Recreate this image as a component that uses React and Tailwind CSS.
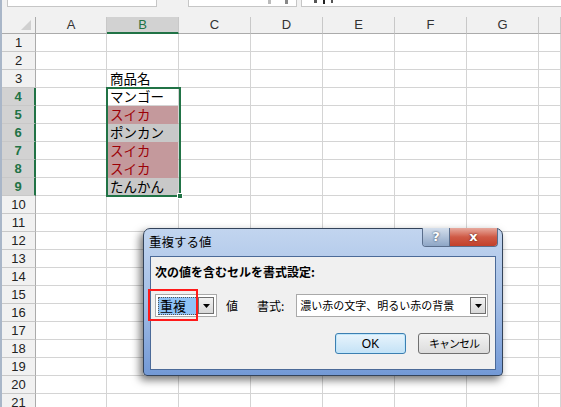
import { Fragment } from 'react';

const cols = ['A', 'B', 'C', 'D', 'E', 'F', 'G', ''];
const rows = Array.from({ length: 21 }, (_, i) => i + 1);

// B column content
const cells = {
  3: { text: '商品名', bg: 'bg-white border-b-[#d4d4d4]', color: 'text-black' },
  4: { text: 'マンゴー', bg: 'bg-white border-b-[#d4d4d4]', color: 'text-black' },
  5: { text: 'スイカ', bg: 'bg-[#c4999c] border-b-[#c4999c]', color: 'text-[#9c0006]' },
  6: { text: 'ポンカン', bg: 'bg-[#c8c8c8] border-b-[#c8c8c8]', color: 'text-black' },
  7: { text: 'スイカ', bg: 'bg-[#c4999c] border-b-[#c4999c]', color: 'text-[#9c0006]' },
  8: { text: 'スイカ', bg: 'bg-[#c4999c] border-b-[#c4999c]', color: 'text-[#9c0006]' },
  9: { text: 'たんかん', bg: 'bg-[#c8c8c8] border-b-[#c8c8c8]', color: 'text-black' },
};

const jp = "font-['Noto_Sans_CJK_JP',sans-serif]";

function DropArrow() {
  return (
    <div className="flex h-[17px] w-[16px] items-center justify-center border border-[#707070] bg-linear-to-b from-[#f2f2f2] to-[#d8d8d8]">
      <svg width="7" height="4" viewBox="0 0 7 4">
        <path d="M0 0h7L3.5 4z" fill="#000" />
      </svg>
    </div>
  );
}

function Dialog() {
  return (
    <div className="absolute left-[141px] top-[228px] h-[148px] w-[360px] rounded-t-[7px] rounded-b-[4px] border border-[#33435a] bg-linear-to-b from-[#c2d5ef] via-[#a3bee6] to-[#7399d6] shadow-[-3px_4px_9px_rgba(0,0,0,0.55)]">
      <div className={`flex h-[27px] items-center pl-[5px] text-[12.5px] text-black ${jp}`}>重複する値</div>

      <div className="absolute right-[4px] top-[-1px] flex h-[19px] overflow-hidden rounded-b-[4px] border border-t-0 border-[#5a6e8c]">
        <div className="flex w-[27px] items-center justify-center border-r border-[#5a6e8c] bg-linear-to-b from-[#d3deec] to-[#8ea6c6] font-['DejaVu_Sans',sans-serif] text-[13px] font-bold text-white [text-shadow:0_0_2px_#1d2b3f]">?</div>
        <div className="flex w-[47px] items-center justify-center bg-linear-to-b from-[#e6a99e] via-[#cf5a46] to-[#c2402a] font-['DejaVu_Sans',sans-serif] text-[13px] font-bold text-white [text-shadow:0_0_2px_#3b0d06]">x</div>
      </div>

      <div className={`mx-[6px] h-[114px] border border-[#4b6a98] bg-[#f0f0f0] pl-[4px] pt-[7px] ${jp}`}>
        <div className="text-[12px] font-bold leading-[16px] text-black">次の値を含むセルを書式設定:</div>

        <div className="relative mt-[14px] flex h-[23px] items-center text-[12px] text-black">
          <div className="flex h-[23px] w-[62px] items-center justify-between border border-[#a9a9a9] bg-white px-[2px]">
            <div className="flex h-[18px] w-[40px] items-center border border-dotted border-[#555] bg-[#8fc3f7] pl-[1px] text-[13px]">重複</div>
            <DropArrow />
          </div>
          <div className="absolute left-[-7px] top-[-5px] h-[32px] w-[50px] border-2 border-[#ff1a1a]" />
          <div className="ml-[9px]">値</div>
          <div className="ml-[19px]">書式:</div>
          <div className="ml-[12px] flex h-[23px] w-[192px] items-center justify-between border border-[#a9a9a9] bg-white pl-[3px] pr-[1px]">
            <span className="text-[11px]">濃い赤の文字、明るい赤の背景</span>
            <DropArrow />
          </div>
        </div>

        <div className="mt-[16px] flex justify-end gap-[12px] pr-[5px]">
          <button className="h-[21px] w-[71px] rounded-[3px] border border-[#3c7fb1] bg-linear-to-b from-[#e8f4fc] to-[#c4e2f6] font-['Liberation_Sans',sans-serif] text-[12px] text-black shadow-[inset_0_0_0_1px_#bfe6fb]">OK</button>
          <button className="h-[21px] w-[72px] rounded-[3px] border border-[#707070] bg-linear-to-b from-[#f3f3f3] to-[#dcdcdc] text-[11px] tracking-[-1px] text-black">キャンセル</button>
        </div>
      </div>
    </div>
  );
}

export default function App() {
  return (
    <div className="relative h-[407px] w-[561px] overflow-hidden border-l-2 border-[#a9b6c8] bg-[#f1f1f1]">
      {/* formula bar strip */}
      <div className="flex h-[17px] items-start">
        <div className="ml-[5px] h-[7px] w-[150px] border border-t-0 border-[#c6c6c6] bg-white" />
        <div className="ml-[31px] flex h-[7px] w-[109px] justify-end gap-[14px] border border-t-0 border-[#c6c6c6] bg-white pr-[8px]">
          <div className="h-[4px] w-[3px] bg-[#bbb]" />
          <div className="h-[4px] w-[3px] bg-[#888]" />
        </div>
        <div className="ml-[4px] flex h-[7px] flex-1 gap-[6px] border border-t-0 border-r-0 border-[#c6c6c6] bg-white pl-[12px]">
          <div className="h-[3px] w-[3px] bg-[#555]" />
          <div className="h-[4px] w-[2px] bg-[#222]" />
          <div className="h-[3px] w-[2px] bg-[#555]" />
        </div>
      </div>

      {/* sheet */}
      <div className="grid grid-cols-[34px_71px_72px_72px_72px_72px_72px_72px_1fr] font-['Liberation_Sans',sans-serif]">
        <div className="relative h-[17px] border-r border-b border-[#ababab] bg-[#f1f1f1]">
          <svg className="absolute bottom-[3px] right-[4px]" width="10" height="10" viewBox="0 0 10 10">
            <path d="M10 0V10H0z" fill="#d0d0d0" />
          </svg>
        </div>
        {cols.map((c) => (
          <div
            key={c || 'end'}
            className={
              c === 'B'
                ? 'flex h-[17px] items-center justify-center border-r border-b-2 border-r-[#c8c8c8] border-b-[#217346] bg-[#d2d2d2] text-[13px] text-[#217346]'
                : 'flex h-[17px] items-center justify-center border-r border-b border-r-[#c8c8c8] border-b-[#ababab] bg-[#f1f1f1] text-[13px] text-[#333]'
            }
          >
            {c}
          </div>
        ))}

        {rows.map((r) => {
          const sel = r >= 4 && r <= 9;
          const cell = cells[r];
          return (
            <Fragment key={r}>
              <div
                className={
                  sel
                    ? 'flex h-[18px] items-center justify-center border-r-2 border-b border-r-[#217346] border-b-[#c8c8c8] bg-[#d2d2d2] text-[13px] font-bold text-[#217346]'
                    : 'flex h-[18px] items-center justify-center border-r border-b border-r-[#ababab] border-b-[#c8c8c8] bg-[#f1f1f1] text-[13px] text-[#222]'
                }
              >
                {r}
              </div>
              {cols.map((c) => {
                if (c === 'B' && cell) {
                  return (
                    <div
                      key={c}
                      className={`flex h-[18px] items-center whitespace-nowrap border-r border-b border-r-[#d4d4d4] pl-[3px] text-[13.5px] leading-[17px] ${jp} ${cell.bg} ${cell.color}`}
                    >
                      {cell.text}
                    </div>
                  );
                }
                return <div key={c || 'end'} className="h-[18px] border-r border-b border-[#d4d4d4] bg-white" />;
              })}
            </Fragment>
          );
        })}
      </div>

      {/* selection outline B4:B9 */}
      <div className="absolute left-[104px] top-[87px] h-[110px] w-[75px] border-2 border-[#217346]" />
      <div className="absolute left-[175px] top-[193px] h-[6px] w-[6px] border border-white bg-[#217346]" />

      <Dialog />
    </div>
  );
}
